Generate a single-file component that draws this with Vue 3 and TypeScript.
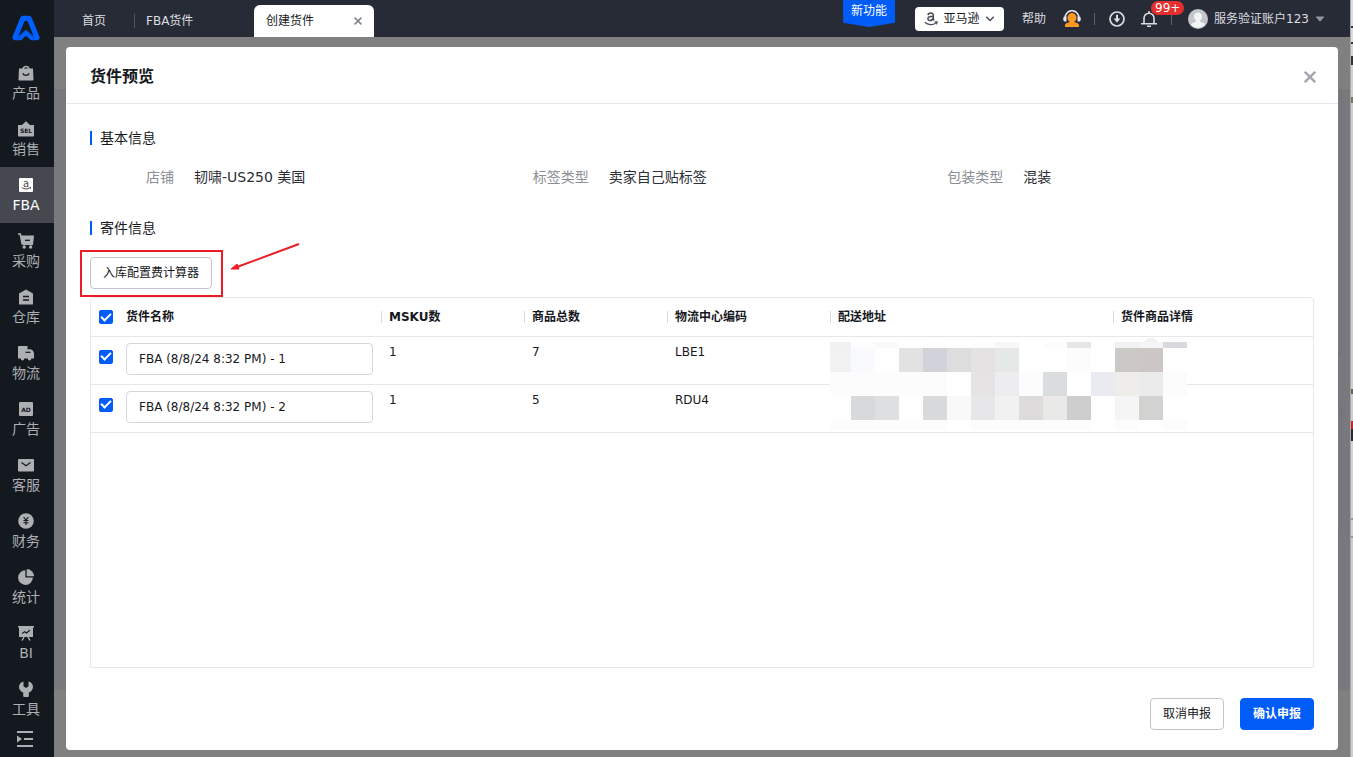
<script setup lang="ts">
import { ref, computed } from 'vue'

interface NavItem { id: string; label: string }
interface Shipment { name: string; msku: number; total: number; center: string; checked: boolean }

const navItems: NavItem[] = [
  { id: 'product', label: '产品' },
  { id: 'sale', label: '销售' },
  { id: 'fba', label: 'FBA' },
  { id: 'purchase', label: '采购' },
  { id: 'warehouse', label: '仓库' },
  { id: 'logistics', label: '物流' },
  { id: 'ad', label: '广告' },
  { id: 'service', label: '客服' },
  { id: 'finance', label: '财务' },
  { id: 'stats', label: '统计' },
  { id: 'bi', label: 'BI' },
  { id: 'tools', label: '工具' },
]
const activeNav = ref('fba')

const info = [
  { label: '店铺', value: '韧啸-US250 美国' },
  { label: '标签类型', value: '卖家自己贴标签' },
  { label: '包装类型', value: '混装' },
]

const headers = ['MSKU数', '商品总数', '物流中心编码', '配送地址', '货件商品详情']

const shipments = ref<Shipment[]>([
  { name: 'FBA (8/8/24 8:32 PM) - 1', msku: 1, total: 7, center: 'LBE1', checked: true },
  { name: 'FBA (8/8/24 8:32 PM) - 2', msku: 1, total: 5, center: 'RDU4', checked: true },
])

const allChecked = computed({
  get: () => shipments.value.every((s) => s.checked),
  set: (v: boolean) => shipments.value.forEach((s) => { s.checked = v }),
})

const mosaicRows: { y: number; h: number; colors: string[] }[] = [
  { y: 0, h: 6, colors: ['#f1f1ef', '#fdfdfd', '#fafafa', '#ffffff', '#fdfdfd', '#ffffff', '#fdfdfd', '#f7f7f5', '#ffffff', '#fcfcfc', '#e6e6e6', '#fefefe', '#f1f1f1', '#f5f5f5', '#d8d9dd'] },
  { y: 6, h: 24, colors: ['#f2f2f2', '#f8fafd', '#ffffff', '#e2e2e2', '#d2d3da', '#dddddd', '#e4e2e3', '#e4e8e6', '#ffffff', '#ffffff', '#fcfcfc', '#ffffff', '#cac9c5', '#ccc7c4', '#ffffff'] },
  { y: 30, h: 24, colors: ['#fcfcfc', '#fcfcfc', '#fcfcfc', '#fcfcfc', '#fcfcfc', '#ffffff', '#e5e3e4', '#ededef', '#fcfcfc', '#d9dddd', '#ffffff', '#e9ebf0', '#eeedea', '#ebebeb', '#fcfcfc'] },
  { y: 54, h: 24, colors: ['#ffffff', '#d8d9db', '#dedfe1', '#ffffff', '#d9dadc', '#f9f9f9', '#e7e7e9', '#f1f1ef', '#dddbdc', '#e9e9e7', '#cecece', '#fefefe', '#f5f5f5', '#d2d2d0', '#ffffff'] },
  { y: 78, h: 10, colors: ['#fcfcfc', '#fcfcfc', '#fcfcfc', '#fcfcfc', '#fcfcfc', '#ffffff', '#fcfcfc', '#fcfcfc', '#fcfcfc', '#fcfcfc', '#fcfcfc', '#ffffff', '#fcfcfc', '#ffffff', '#fcfcfc'] },
]
const mosaic = mosaicRows.flatMap((row) =>
  row.colors.map((fill, i) => ({ x: i === 0 ? 0 : 21 + (i - 1) * 24, y: row.y, w: i === 0 ? 21 : 24, h: row.h, fill })),
)
</script>

<template>
  <div class="app">
    <nav class="sidebar">
      <a href="#" class="logo" aria-label="主页">
        <svg width="30" height="28" viewBox="0 0 30 28" fill="none" stroke="#0060ff" stroke-linejoin="round" stroke-linecap="round">
          <path d="M4 23.500 11.800 4.400h6.400L26 23.500" stroke-width="5.200" />
          <path d="M5 24h4l6-5.500 6 5.500h4" stroke-width="4.600" />
          <path d="M9.500 21.500 15 16.200l5.500 5.300M9.500 21.500l-2 3M20.500 21.500l2 3" stroke="#14337a" stroke-width=".5" />
        </svg>
      </a>
      <div class="nav-list">
        <a v-for="n in navItems" :key="n.id" href="#" class="nav-item" :class="{ active: n.id === activeNav }" @click.prevent="activeNav = n.id">
          <svg width="16" height="16" viewBox="0 0 16 16" fill="currentColor">
            <template v-if="n.id === 'product'">
              <path d="M1 3.500h14l.5 11a1 1 0 0 1-1 1h-13a1 1 0 0 1-1-1z" />
              <path d="M5 4.500a3 3 0 0 1 6 0" fill="none" stroke="currentColor" stroke-width="1.700" />
              <path d="M4.800 8.300c1 2.800 5.400 2.800 6.400 0" fill="none" class="cut" stroke-width="1.300" />
            </template>
            <template v-else-if="n.id === 'sale'">
              <path d="M0 4h16v10.500a1 1 0 0 1-1 1H1a1 1 0 0 1-1-1z" />
              <path d="M4.500 4.500 8 1.200l3.500 3.300" stroke="currentColor" stroke-width="1.400" />
              <text x="8" y="12.300" class="glyph">SEL</text>
            </template>
            <template v-else-if="n.id === 'fba'">
              <rect x="1" y="1" width="14" height="14" rx="1" />
              <text x="8" y="9.500" class="glyph amazon">a</text>
              <path d="M3.800 10.500c2.400 2 5.800 2 8 .2M12.300 9.800v2" fill="none" class="cut" stroke-width="1" />
            </template>
            <template v-else-if="n.id === 'purchase'">
              <path d="M2.600 2.500H16l-1 9.500H4.700z" />
              <path d="M0 1h2.300l2 10.500" fill="none" stroke="currentColor" stroke-width="1.600" />
              <path d="M7 7.300h5" class="cut" stroke-width="1.300" />
              <circle cx="6.200" cy="14" r="1.700" /><circle cx="12.600" cy="14" r="1.700" />
            </template>
            <template v-else-if="n.id === 'warehouse'">
              <path d="M8 .5 15 4.500V15a.6.6 0 0 1-.6.6H1.600A.6.6 0 0 1 1 15V4.500z" />
              <path d="M5 7.500h6M5 11h6" class="cut" stroke-width="1.300" />
            </template>
            <template v-else-if="n.id === 'logistics'">
              <path d="M0 2a1 1 0 0 1 1-1h8.500v3.200H12c2 0 4 2.200 4 4.300v5H0z" />
              <path d="M7.500 7.300h5" class="cut" stroke-width="1.200" />
              <circle cx="4.500" cy="13.800" r="1.800" /><circle cx="11.500" cy="13.800" r="1.800" />
            </template>
            <template v-else-if="n.id === 'ad'">
              <rect x="1" y="1" width="14" height="14" rx="1" />
              <text x="8" y="10.600" class="glyph">AD</text>
            </template>
            <template v-else-if="n.id === 'service'">
              <rect x="0" y="2" width="16" height="12.500" rx="1" />
              <path d="M3.500 5.500 8 8.700l4.500-3.200" fill="none" class="cut" stroke-width="1.200" />
            </template>
            <template v-else-if="n.id === 'finance'">
              <circle cx="8" cy="8" r="7.800" />
              <path d="M5.600 4 8 7l2.400-3M8 7v5M5.500 7.500h5M5.500 9.700h5" fill="none" class="cut" stroke-width="1.100" />
            </template>
            <template v-else-if="n.id === 'stats'">
              <path d="M7.400 1.200v7.400h7.500A7.400 7.400 0 1 1 7.400 1.200z" />
              <path d="M8.700 0a7.300 7.300 0 0 1 7.300 7.300H8.700z" />
            </template>
            <template v-else-if="n.id === 'bi'">
              <path d="M0 1h16v1.500h-1V12H1V2.500H0z" />
              <path d="M4 8.600 6.500 6.700l2 1.300L12 5" fill="none" class="cut" stroke-width="1.100" />
              <path d="m6 12-2 3.500M10 12l2 3.500" stroke="currentColor" stroke-width="1.500" />
            </template>
            <template v-else>
              <path d="M5.500.5v4.800L8 7l2.500-1.700V.5C13.300 1 15 3.300 15 5.900c0 2.500-1.600 4.600-4.200 5.600V15a.9.9 0 0 1-.9.9H6.100a.9.9 0 0 1-.9-.9v-3.500C2.600 10.500 1 8.400 1 5.900 1 3.300 2.700 1 5.500.5z" />
            </template>
          </svg>
          <span>{{ n.label }}</span>
        </a>
      </div>
      <button class="collapse" type="button" aria-label="展开菜单">
        <svg width="18" height="18" viewBox="0 0 18 18" fill="#acafb3"><path d="M1 1h16v2H1zM8 8h9v2H8zM1 15h16v2H1zM1 5.500 6 9l-5 3.500z" /></svg>
      </button>
    </nav>

    <div class="workspace">
      <header class="topbar">
        <div class="tabs">
          <a href="#" class="tab home">首页</a>
          <a href="#" class="tab second">FBA货件</a>
          <div class="tab current">
            <span>创建货件</span>
            <button type="button" aria-label="关闭标签">
              <svg width="8" height="8" viewBox="0 0 8 8" stroke="#85888e" stroke-width="1.700"><path d="m.6.6 6.800 6.800M7.400.6.600 7.400" /></svg>
            </button>
          </div>
        </div>
        <div class="tools">
          <a href="#" class="flag">新功能</a>
          <label class="market">
            <svg width="14" height="14" viewBox="0 0 14 14" fill="none" stroke="#454a55">
              <path d="M4 3.200C4.300.5 9.300.3 9.300 3.100v3.700c0 .9.300 1.300.9 1.700M9.200 4.300C6 4.300 3.900 4.900 3.900 6.800c0 2.400 4.100 2.300 5.400-.7" stroke-width="1.500" />
              <path d="M.8 10.300c3.300 2.900 8 2.900 10.900 1M10.500 10.200l2.600-.2-.6 2.400" stroke-width="1.200" />
            </svg>
            <select aria-label="平台"><option>亚马逊</option></select>
            <svg width="10" height="6" viewBox="0 0 10 6" fill="none" stroke="#454a55" stroke-width="1.400"><path d="m1.300.8 3.700 3.700L8.700.8" /></svg>
          </label>
          <a href="#" class="help">帮助</a>
          <button class="agent" type="button" aria-label="在线客服">
            <svg width="18" height="18" viewBox="0 0 18 18">
              <path d="M2.200 9V7.500a6.800 6.800 0 0 1 13.600 0V9" fill="none" stroke="#e9eaec" stroke-width="1.600" />
              <path d="M1.800 6.500h1.700v5H2A1.800 1.800 0 0 1 .3 9.600V8a1.500 1.500 0 0 1 1.500-1.500zM16.200 6.500h-1.700v5H16a1.800 1.800 0 0 0 1.700-1.900V8a1.500 1.500 0 0 0-1.500-1.500z" fill="#e9eaec" />
              <path d="M9 3a4.500 4.500 0 0 1 4.500 4.700c0 1.900-1 3.500-2.400 4.300l3.600 1.300c1 .4 1.300 1.300 1.300 3.700H2c0-2.400.3-3.300 1.300-3.700L6.900 12c-1.400-.8-2.400-2.400-2.400-4.300A4.500 4.500 0 0 1 9 3z" fill="#fb9a24" />
            </svg>
          </button>
          <i class="bar"></i>
          <button class="download" type="button" aria-label="下载中心">
            <svg width="16" height="16" viewBox="0 0 16 16" fill="none" stroke="#dcdde0"><circle cx="8" cy="8" r="7" stroke-width="1.700" /><path d="M8 3.800V8" stroke-width="2" /><path d="M4.600 7.400h6.800L8 11.800z" fill="#dcdde0" stroke="none" /></svg>
          </button>
          <button class="bell" type="button" aria-label="通知">
            <svg width="16" height="16" viewBox="0 0 16 16" fill="none" stroke="#dcdde0" stroke-width="1.600"><path d="M3 12.500V7.200a5 5 0 0 1 10 0v5.300M0 12.700h16M8 0v2M6 15.200h4" /></svg>
            <span class="count">99+</span>
          </button>
          <i class="bar"></i>
          <button class="account" type="button">
            <svg width="20" height="20" viewBox="0 0 20 20"><circle cx="10" cy="10" r="10" fill="#c3c6cc" /><path d="M10 3.600c2.500 0 4 1.700 4 4 0 1.700-.8 3.200-1.900 4v1.200c2.600.6 4.400 1.500 4.800 3.200A10 10 0 0 1 3.100 16c.4-1.700 2.200-2.600 4.800-3.200v-1.200C6.800 10.800 6 9.300 6 7.600c0-2.300 1.500-4 4-4z" fill="#f3f4f5" /></svg>
            <span>服务验证账户123</span>
            <svg width="10" height="6" viewBox="0 0 10 6" fill="#92959c"><path d="M1.500.5h7q1 0 .4.800L5.500 5.200q-.5.500-1 0L1.100 1.300Q.5.500 1.500.5z" /></svg>
          </button>
        </div>
      </header>

      <main class="stage">
        <div class="backdrop">
          <div class="ghost first"></div>
          <div class="ghost"></div>
        </div>
        <section class="modal" role="dialog" aria-labelledby="dlg-title">
          <header class="modal-head">
            <h1 id="dlg-title">货件预览</h1>
            <button type="button" aria-label="关闭">
              <svg width="12" height="12" viewBox="0 0 12 12" stroke="#a3a6ac" stroke-width="2.400"><path d="m.8.8 10.400 10.400M11.200.8.800 11.200" /></svg>
            </button>
          </header>
          <div class="modal-body">
            <h2>基本信息</h2>
            <dl class="info">
              <div v-for="item in info" :key="item.label">
                <dt>{{ item.label }}</dt>
                <dd>{{ item.value }}</dd>
              </div>
            </dl>
            <h2>寄件信息</h2>
            <div class="calc">
              <button type="button" class="btn">入库配置费计算器</button>
              <svg class="callout" width="222" height="56" viewBox="0 0 222 56" fill="none" stroke="#ed1c24">
                <rect x="1" y="8" width="141" height="45" stroke-width="2" />
                <path d="M219 1 157 24" stroke-width="2" />
                <path d="m151 26 6-5 2 5z" fill="#ed1c24" stroke-width="1" />
              </svg>
            </div>
            <div class="table-box">
              <table>
                <colgroup>
                  <col class="c-check" /><col class="c-name" /><col class="c-num" /><col class="c-num" /><col class="c-center" /><col class="c-addr" /><col />
                </colgroup>
                <thead>
                  <tr>
                    <th class="pick"><input v-model="allChecked" type="checkbox" aria-label="全选" /></th>
                    <th class="plain">货件名称</th>
                    <th v-for="h in headers" :key="h"><span>{{ h }}</span></th>
                  </tr>
                </thead>
                <tbody>
                  <tr v-for="(s, i) in shipments" :key="i">
                    <td class="pick"><input v-model="s.checked" type="checkbox" :aria-label="'选择 ' + s.name" /></td>
                    <td><input v-model="s.name" class="text" type="text" aria-label="货件名称" /></td>
                    <td>{{ s.msku }}</td>
                    <td>{{ s.total }}</td>
                    <td>{{ s.center }}</td>
                    <td class="addr">
                      <svg v-if="i === 0" class="mosaic" width="357" height="92" viewBox="0 -4 357 92" shape-rendering="crispEdges">
                        <circle cx="321" cy="4" r="8" fill="#f0f1f3" />
                        <rect v-for="(m, k) in mosaic" :key="k" :x="m.x" :y="m.y" :width="m.w" :height="m.h" :fill="m.fill" />
                      </svg>
                    </td>
                    <td></td>
                  </tr>
                </tbody>
              </table>
            </div>
          </div>
          <footer class="modal-foot">
            <button type="button" class="btn">取消申报</button>
            <button type="button" class="btn primary">确认申报</button>
          </footer>
        </section>
      </main>
    </div>
    <div class="edge"></div>
  </div>
</template>

<style>
html, body { margin: 0; }
</style>

<style scoped>
* { box-sizing: border-box; }
.app {
  display: flex;
  height: 100vh;
  overflow: hidden;
  font-family: "DejaVu Sans", "Noto Sans CJK SC", sans-serif;
  font-size: 12px;
  line-height: 20px;
  color: #16181d;
}
button { font: inherit; color: inherit; background: none; border: 0; padding: 0; cursor: pointer; }
a { color: inherit; text-decoration: none; }
svg { display: block; flex: none; }

.sidebar { width: 54px; flex: none; display: flex; flex-direction: column; background: #14181f; color: #acafb3; }
.logo { height: 55px; flex: none; display: flex; align-items: center; justify-content: center; padding-right: 2px; }
.nav-list { flex: 1; min-height: 0; overflow: hidden; }
.nav-item { height: 56px; display: flex; flex-direction: column; align-items: center; gap: 2px; padding: 10px 2px 0 0; font-size: 14px; line-height: 20px; --hole: #14181f; }
.nav-item.active { background: #45484f; color: #fff; --hole: #45484f; }
.cut { stroke: var(--hole); }
.glyph { fill: var(--hole); font-size: 6px; font-weight: bold; text-anchor: middle; }
.glyph.amazon { font-size: 10px; font-weight: normal; }
.collapse { height: 30px; flex: none; display: flex; justify-content: center; padding: 3px 4px 0 0; }

.workspace { flex: 1; min-width: 0; display: flex; flex-direction: column; }
.topbar { height: 37px; flex: none; display: flex; justify-content: space-between; background: #272b36; color: #dcdde0; }
.tabs { display: flex; align-items: flex-end; }
.tab { width: 120px; height: 32px; display: flex; align-items: center; padding: 0 12px; white-space: nowrap; }
.tab.home { width: 80px; justify-content: center; }
.tab.second::before { content: ""; width: 1px; height: 14px; margin: 0 11px 0 -12px; background: #52565f; }
.tab.current { justify-content: space-between; background: #fff; color: #16181d; border-radius: 6px 6px 0 0; }
.tools { display: flex; align-items: center; padding-right: 25px; white-space: nowrap; }
.flag { align-self: flex-start; width: 52px; height: 27px; line-height: 22px; text-align: center; color: #fff; background: #005cf7; clip-path: polygon(0 0, 100% 0, 100% 84%, 50% 100%, 0 84%); margin-right: 20px; }
.market { display: flex; align-items: center; justify-content: space-between; width: 89px; height: 24px; padding: 0 9px; background: #fff; border-radius: 4px; margin-right: 18px; }
.market select { appearance: none; width: 36px; border: 0; padding: 0; background: none; font: inherit; color: #16181d; }
.help { margin-right: 17px; }
.agent { margin-right: 13px; }
.bar { width: 1px; height: 12px; background: #5c606a; }
.download { margin: 0 16px 0 14px; }
.bell { position: relative; margin-right: 14px; }
.count { position: absolute; left: 10px; top: -10px; height: 14px; padding: 0 4px; border-radius: 7px; background: #e62e2e; color: #fff; line-height: 14px; }
.account { display: flex; align-items: center; gap: 6px; margin-left: 16px; }

.stage { position: relative; flex: 1; min-height: 0; display: flex; padding: 10px 12px 7px; background: #808080; }
.backdrop { position: absolute; inset: 52px 0 67px; background: #77797c; }
.ghost { height: 126px; margin: 0 8px 53px 12px; border: 1px solid #6f7174; border-radius: 4px; }
.ghost.first { height: 265px; border-top: 0; }

.modal { position: relative; flex: 1; min-width: 0; display: flex; flex-direction: column; background: #fff; border-radius: 4px; }
.modal-head { height: 57px; flex: none; display: flex; align-items: center; justify-content: space-between; padding: 3px 22px 0 24px; border-bottom: 1px solid #e6e7ea; }
h1 { margin: 0; font-size: 16px; line-height: 24px; font-weight: bold; }
.modal-body { flex: 1; min-height: 0; display: flex; flex-direction: column; padding: 24px 24px 0; }
h2 { display: flex; align-items: center; gap: 8px; margin: 0; font-size: 14px; line-height: 20px; font-weight: normal; }
h2::before { content: ""; width: 2px; height: 14px; background: #005cf7; }
.info { display: grid; grid-template-columns: repeat(3, 1fr); gap: 20px; margin: 19px 0 31px; font-size: 14px; line-height: 20px; }
.info > div { display: flex; gap: 20px; }
.info dt { width: 84px; text-align: right; color: #8b8e95; }
.info dd { margin: 0; color: #2b2e35; }
.calc { position: relative; align-self: flex-start; margin: 19px 0 8px; }
.callout { position: absolute; left: -10px; top: -14px; pointer-events: none; }
.btn { height: 32px; padding: 0 12px; border: 1px solid #c2c4ca; border-radius: 4px; background: #fff; white-space: nowrap; }
.btn.primary { background: #005cf7; border-color: #005cf7; color: #fff; font-weight: bold; }

.table-box { flex: 1; min-height: 0; border: 1px solid #e6e7ea; border-radius: 4px 4px 0 0; }
table { width: 100%; table-layout: fixed; border-collapse: separate; border-spacing: 0; }
.c-check { width: 27px; }
.c-name { width: 263px; }
.c-num { width: 143px; }
.c-center { width: 163px; }
.c-addr { width: 283px; }
th { height: 39px; padding: 0; text-align: left; font-weight: bold; border-bottom: 1px solid #e6e7ea; }
th.plain { padding-left: 8px; }
th span { display: block; height: 12px; line-height: 12px; padding-left: 7px; border-left: 1px solid #d8dadf; }
td { height: 48px; padding: 5px 8px 0; vertical-align: top; border-bottom: 1px solid #e6e7ea; }
th.pick, td.pick { padding: 0 0 0 8px; vertical-align: middle; }
td.pick { padding-bottom: 8px; }
input[type="checkbox"] { appearance: none; display: grid; place-items: center; width: 14px; height: 14px; margin: 0; border: 1px solid #005cf7; border-radius: 2px; background: #fff; }
input[type="checkbox"]:checked { background: #005cf7; }
input[type="checkbox"]:checked::after { content: ""; width: 8px; height: 4px; margin-bottom: 3px; border-left: 2px solid #fff; border-bottom: 2px solid #fff; transform: rotate(-45deg); }
input.text { display: block; width: 100%; height: 32px; margin-top: 1px; padding: 0 12px; border: 1px solid #d5d7dc; border-radius: 4px; font: inherit; color: inherit; }
.addr { position: relative; }
.mosaic { position: absolute; left: 0; top: 1px; }

.modal-foot { flex: none; display: flex; justify-content: flex-end; gap: 16px; padding: 30px 24px 20px; }

.edge {
  width: 3px;
  flex: none;
  border-left: 1px solid #a9a9a9;
  background: linear-gradient(#dcdcdc 0 26px, #333 26px 28px, #dcdcdc 28px 42px, #333 42px 44px, #d4d4d4 44px 56px, #333 56px 65px, #d0d0d0 65px 97px, #776 97px 103px, #cdcdcd 103px 389px, #665 389px 394px, #cdcdcd 394px 421px, #c92530 421px 429px, #252a35 429px 441px, #d3d3d3 441px 518px, #999 518px 520px, #d3d3d3 520px 536px, #999 536px 538px, #cdcdcd 538px);
}
</style>
